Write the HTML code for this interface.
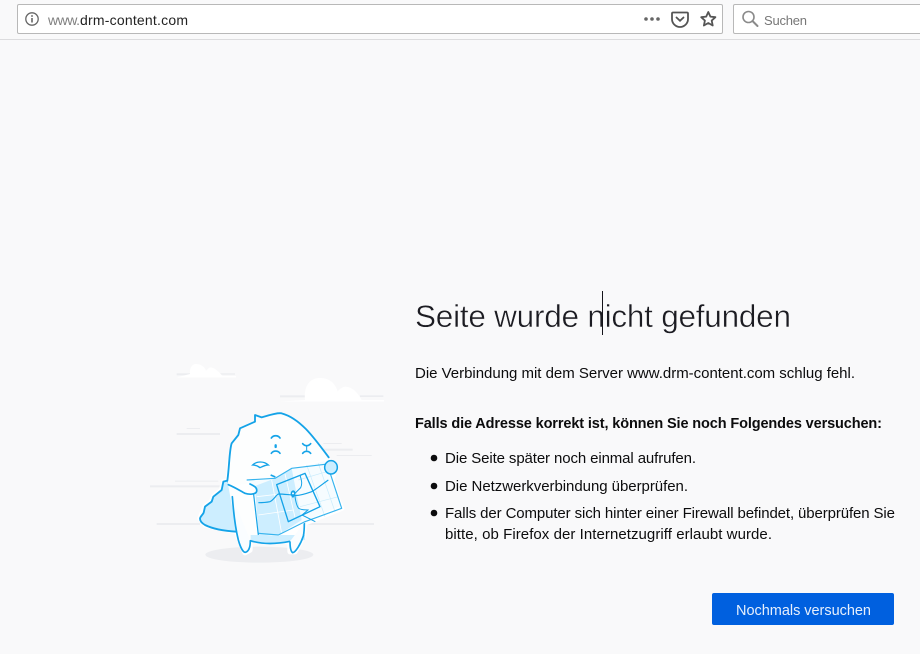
<!DOCTYPE html>
<html><head><meta charset="utf-8"><style>
html,body{margin:0;padding:0;width:920px;height:654px;overflow:hidden;background:#f9f9fa}
svg{display:block}
text{font-family:"Liberation Sans",sans-serif;font-size:15px;fill:#0c0c0d}
</style></head><body>
<svg width="920" height="654" viewBox="0 0 920 654" xmlns="http://www.w3.org/2000/svg">
<rect width="920" height="654" fill="#f9f9fa"/>
<rect x="0" y="39" width="920" height="1" fill="#dcdcde"/>
<rect x="17.500" y="4.500" width="705" height="29" rx="1.500" fill="#fff" stroke="#b8b8b8"/>
<rect x="733.500" y="4.500" width="200" height="29" rx="1.500" fill="#fff" stroke="#b8b8b8"/>
<circle cx="32" cy="19" r="6.200" fill="none" stroke="#666" stroke-width="1.300"/>
<rect x="31.200" y="18" width="1.600" height="4.500" fill="#666"/><rect x="31.200" y="15.200" width="1.600" height="1.600" fill="#666"/>
<text x="48" y="25" style="font-size:14px;fill:#808080" textLength="32">www.</text>
<text x="80" y="25" style="font-size:14px;fill:#222" textLength="108">drm-content.com</text>
<g fill="#666"><circle cx="646" cy="19" r="1.800"/><circle cx="652" cy="19" r="1.800"/><circle cx="658" cy="19" r="1.800"/></g>
<path d="M673 12.500h14a1 1 0 0 1 1 1V19a8 8 0 0 1-16 0v-5.500a1 1 0 0 1 1-1z" fill="none" stroke="#555" stroke-width="1.800"/>
<path d="M676.500 17.500l3.500 3.300 3.500-3.300" fill="none" stroke="#555" stroke-width="1.800" stroke-linecap="round"/>
<path d="M708.300 12l2.100 4.600 5 .6-3.700 3.400 1 4.900-4.400-2.500-4.400 2.500 1-4.900-3.700-3.400 5-.6z" fill="none" stroke="#555" stroke-width="1.800" stroke-linejoin="round"/>
<circle cx="748.500" cy="17" r="5.500" fill="none" stroke="#8a8a8a" stroke-width="1.600"/>
<path d="M752.500 21l5 5" stroke="#8a8a8a" stroke-width="2" stroke-linecap="round"/>
<text x="764" y="25" style="font-size:13px;fill:#777" textLength="43">Suchen</text>

<text x="415" y="327" style="font-size:31.500px;fill:#1c1c22;stroke:#f9f9fa;stroke-width:.45px" textLength="376">Seite wurde nicht gefunden</text>
<rect x="602" y="291" width="1" height="44" fill="#15141a"/>
<text x="415" y="378" textLength="440">Die Verbindung mit dem Server www.drm-content.com schlug fehl.</text>
<text x="415" y="428" style="font-weight:bold;font-size:14.500px" textLength="467">Falls die Adresse korrekt ist, können Sie noch Folgendes versuchen:</text>
<circle cx="434" cy="458" r="3.300" fill="#0c0c0d"/>
<circle cx="434" cy="486" r="3.300" fill="#0c0c0d"/>
<circle cx="434" cy="513" r="3.300" fill="#0c0c0d"/>
<text x="445" y="463" textLength="251">Die Seite später noch einmal aufrufen.</text>
<text x="445" y="491" textLength="243">Die Netzwerkverbindung überprüfen.</text>
<text x="445" y="518" textLength="450">Falls der Computer sich hinter einer Firewall befindet, überprüfen Sie</text>
<text x="445" y="539" textLength="327">bitte, ob Firefox der Internetzugriff erlaubt wurde.</text>
<rect x="712" y="593" width="182" height="32" rx="2" fill="#0060df"/>
<text x="736" y="615" style="fill:#e6effc;font-size:14.500px" textLength="135">Nochmals versuchen</text>

<g transform="translate(140 350) scale(.33333)">
  <g fill="#ecedf0">
    <rect x="110" y="70" width="50" height="6"/><rect x="230" y="70" width="55" height="4"/>
    <rect x="420" y="136" width="75" height="6"/><rect x="660" y="136" width="70" height="5"/>
    <rect x="140" y="234" width="40" height="3"/><rect x="110" y="249" width="130" height="6"/>
    <rect x="550" y="279" width="55" height="3"/><rect x="550" y="296" width="88" height="6"/>
    <rect x="590" y="315" width="105" height="3"/>
    <rect x="105" y="392" width="130" height="3"/><rect x="30" y="406" width="220" height="6"/>
    <rect x="50" y="519" width="130" height="6"/><rect x="480" y="519" width="222" height="6"/>
    <ellipse cx="358" cy="614" rx="162" ry="24"/>
  </g>
  <g fill="#fff">
    <path d="M110 82h178v-4h-40c-8-8-20-24-36-26-6 0-10 8-14 10-4-12-16-20-30-20-12 0-20 12-18 30z"/>
    <path d="M420 155h312v-5H665c-12-22-26-38-48-40-10 0-18 8-24 14-8-26-28-42-56-40-30 2-46 26-42 66z"/>
  </g>
  <!-- white halo -->
  <path d="M250 395l-5 25-25 20-5 15-20 15-15 35 15 20 95 20 5 15 20 48 15-8v-30l120 5v30h15l25-45 3-40 112-45-40-85c20-2 25-40-18-38l-72-100-50-30-60 12-20-7v20l-45 20-5 20-25 45-5 60z" fill="#fff" stroke="#fff" stroke-width="16" stroke-linejoin="round"/>
  <!-- tail -->
  <path d="M262 392l-12 3-5 25-25 20-5 15-20 15-4 18c-4 8-11 12-11 18 0 8 8 15 15 19 28 14 60 18 95 20l5-100z" fill="#cdeeff" stroke="#14a3e8" stroke-width="5.500" stroke-linejoin="round"/>
  <!-- belly -->
  <path d="M330 555h165v15l-40 5c-40 8-85 8-125-5z" fill="#cdeeff"/>
  <!-- body -->
  <path d="M262 392C268 350 268 300 275 280L295 255 300 235 345 215 345 195 365 202C390 195 410 188 425 190 480 205 520 260 575 330L460 420 348 470 358 555H332V580C330 600 325 606 315 608 300 590 290 570 290 545Z" fill="#fdfefe"/>
  <path d="M262 392C268 350 268 300 275 280L295 255 300 235 345 215 345 195 365 202C390 195 410 188 425 190 480 205 520 260 566 322" fill="none" stroke="#14a3e8" stroke-width="5.500" stroke-linecap="round" stroke-linejoin="round"/>
  <path d="M277 440C280 480 285 530 295 570 302 595 310 607 316 607 328 604 331 590 331 572" fill="#fafdff" stroke="#14a3e8" stroke-width="5" stroke-linecap="round"/>
  <path d="M331 572c38 12 80 10 119 2" fill="none" stroke="#14a3e8" stroke-width="5"/>
  <path d="M450 574c0 15 2 30 8 34 8 0 24-25 32-50 3-12 3-25 3-40" fill="#fafdff" stroke="#14a3e8" stroke-width="5" stroke-linejoin="round"/>
  <!-- map -->
  <path d="M320 390l85-5 50-30 100-25 15 25 35 115-110 45-80 40-60-5-10-70-5-50z" fill="#f6fcff" stroke="#fff" stroke-width="6" stroke-linejoin="round"/>
  <path d="M345 408l60-23 50-30 30 155-70 45-60 0-5-75z" fill="#cdeeff"/>
  <path d="M355 495l105-15M395 390l30 160M350 440l70-8M435 372l30 130" fill="none" stroke="#fff" stroke-width="2.500"/>
  <path d="M500 345l55 155M535 340l50 145M480 470l115-30M475 390l85-25" fill="none" stroke="#c9ecfc" stroke-width="2"/>
  <path d="M320 390l85-5 50-30 100-12 15 25 35 107-110 40-80 40-60-5" fill="none" stroke="#37b4ee" stroke-width="3.500" stroke-linejoin="round"/>
  <path d="M340 425l15 130" fill="none" stroke="#14a3e8" stroke-width="3.500"/>
  <path d="M392 375l14 6" stroke="#14a3e8" stroke-width="5"/>
  <!-- arm left -->
  <path d="M265 404c20 8 35 18 50 26 12 4 32 4 35-6 2-12-8-16-20-22" fill="#fff" stroke="#14a3e8" stroke-width="5" stroke-linecap="round"/>
  <path d="M355 458c12 0 25-1 35-3 12-6 18-20 25-23 14 0 28 2 42 3 10 4 30 0 58-10 18-10 35-25 50-35" fill="none" stroke="#14a3e8" stroke-width="3.500"/>
  <path d="M410 404l85-34 45 100-95 45z" fill="none" stroke="#14a3e8" stroke-width="4" stroke-linejoin="round"/>
  <path d="M480 375c4 15 8 25 2 38l-18 18c2 20 5 35 12 44 10 6 20 4 28 5l-18 15 40 20" fill="none" stroke="#14a3e8" stroke-width="3"/>
  <path d="M459 444c-9-8-9-21 0-23 9 0 10 12 0 23z" fill="#14a3e8"/>
  <circle cx="459" cy="430" r="3" fill="#fff"/>
  <!-- hand right -->
  <ellipse cx="573" cy="352" rx="19" ry="20" fill="#cdeeff" stroke="#14a3e8" stroke-width="4.500"/>
  <!-- face -->
  <g fill="none" stroke="#14a3e8" stroke-width="5" stroke-linecap="round">
    <path d="M394 264c6-9 20-9 26 0"/>
    <path d="M394 310c6-9 20-9 26 0"/>
    <path d="M407 286v5" stroke-width="7"/>
    <path d="M488 281c6 8 18 8 24 0"/>
    <path d="M488 310c6-8 18-8 24 0"/>
    <path d="M500 290v10" stroke-width="3"/>
    <path d="M338 345c12-12 34-12 47 0-8 0-12 2-25 8-8-6-14-8-22-8z" fill="#fff" stroke-width="4"/>
  </g>
</g>
</svg>
</body></html>
